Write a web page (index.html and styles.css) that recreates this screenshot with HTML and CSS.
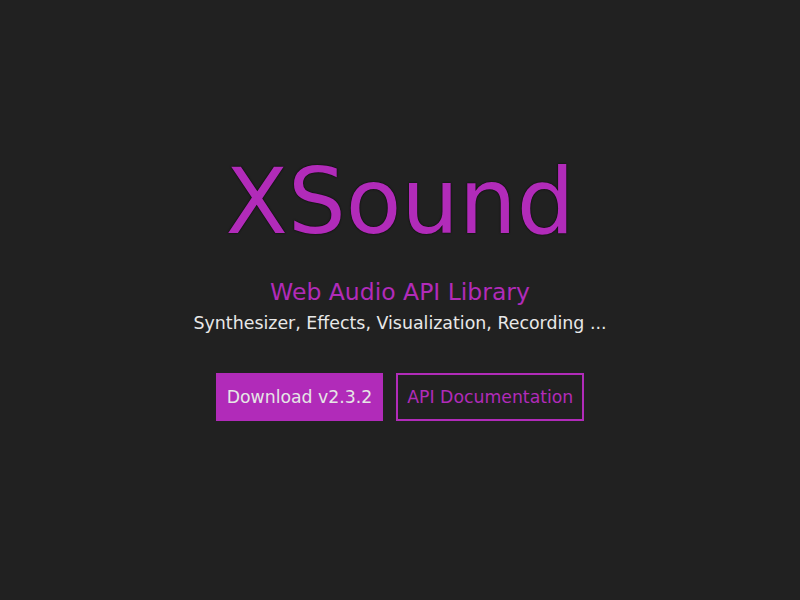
FILE: index.html
```html
<!DOCTYPE html>
<html>
<head>
<meta charset="utf-8">
<link rel="stylesheet" href="styles.css">
</head>
<body>
<main class="hero">
  <h1 class="title">XSound</h1>
  <p class="subtitle">Web Audio API Library</p>
  <p class="features">Synthesizer, Effects, Visualization, Recording ...</p>
  <div class="actions">
    <a class="btn btn-primary" href="#">Download v2.3.2</a>
    <a class="btn btn-outline" href="#">API Documentation</a>
  </div>
</main>
</body>
</html>
```
FILE: styles.css
```css
html, body {
  margin: 0;
  height: 100%;
  background: #212121;
}
body {
  font-family: "DejaVu Sans", "Liberation Sans", sans-serif;
  color: #e8e8e8;
}
.hero {
  display: flex;
  flex-direction: column;
  align-items: center;
  padding-top: 147px;
}
.title {
  margin: 0;
  font-size: 91px;
  font-weight: normal;
  line-height: 1.2;
  color: #b12bb9;
  text-shadow: 0 0 2px #000;
}
.subtitle {
  margin: 21px 0 0;
  font-size: 23.5px;
  line-height: 30px;
  color: #b12bb9;
}
.features {
  margin: 4px 0 0;
  font-size: 17.4px;
  line-height: 24px;
  color: #e8e8e8;
}
.actions {
  display: flex;
  gap: 13px;
  margin-top: 38px;
}
.btn {
  display: flex;
  align-items: center;
  height: 48px;
  box-sizing: border-box;
  padding: 0 9px;
  font-size: 17.3px;
  text-decoration: none;
  border: 2px solid #b12bb9;
}
.btn-primary {
  background: #b12bb9;
  color: #e6e6e6;
}
.btn-outline {
  background: transparent;
  color: #b12bb9;
}
```
